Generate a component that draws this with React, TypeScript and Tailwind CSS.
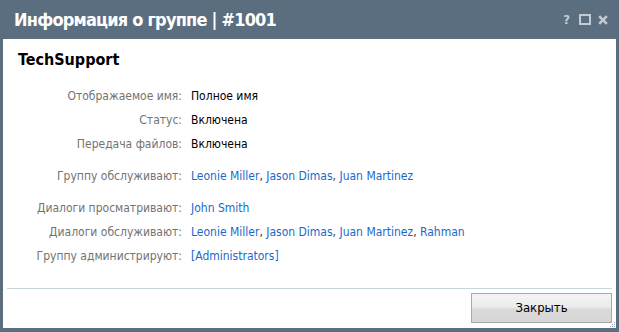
import React from 'react';

const font = { fontFamily: '"DejaVu Sans Condensed", "DejaVu Sans", Tahoma, sans-serif' };

type Row = { label: string; value?: string; links?: string[]; mt?: boolean };

const rows: Row[] = [
  { label: 'Отображаемое имя:', value: 'Полное имя' },
  { label: 'Статус:', value: 'Включена' },
  { label: 'Передача файлов:', value: 'Включена' },
  { label: 'Группу обслуживают:', links: ['Leonie Miller', 'Jason Dimas', 'Juan Martinez'], mt: true },
  { label: 'Диалоги просматривают:', links: ['John Smith'], mt: true },
  { label: 'Диалоги обслуживают:', links: ['Leonie Miller', 'Jason Dimas', 'Juan Martinez', 'Rahman'] },
  { label: 'Группу администрируют:', links: ['[Administrators]'] },
];

const App: React.FC = () => {
  return (
    <div className="w-[619px] h-[332px] bg-[#5b6e80] flex flex-col px-[3px] pb-[4px]" style={font}>
      {/* title bar */}
      <div className="h-[39px] flex items-center justify-between pl-[11px] pr-[8px]">
        <span className="text-white font-bold text-[18px] tracking-[-0.8px]">Информация о группе | #1001</span>
        <div className="flex items-center text-[#c3cbd3]">
          <span className="text-[13px] leading-none font-bold">?</span>
          <span className="ml-[9px] w-[12px] h-[11px] border-2 border-[#c3cbd3]"></span>
          <svg className="ml-[7px]" width="10" height="10" viewBox="0 0 10 10">
            <path d="M1.2 1.2 L8.8 8.8 M8.8 1.2 L1.2 8.8" stroke="#c3cbd3" strokeWidth="2.6" />
          </svg>
        </div>
      </div>

      {/* body */}
      <div className="relative flex-1 bg-white flex flex-col">
        <div className="px-[15px] pt-[11px] flex-1">
          <h1 className="text-[16px] font-bold text-black leading-[20px]">TechSupport</h1>
          <div className="mt-[14px] flex flex-col text-[12px]">
            {rows.map((r, i) => (
              <div key={i} className={`flex h-[24px] items-center ${r.mt ? 'mt-[8px]' : ''}`}>
                <span className="w-[164px] text-right text-[#737373] shrink-0">{r.label}</span>
                <span className="ml-[9px]">
                  {r.value && <span className="text-black">{r.value}</span>}
                  {r.links &&
                    r.links.map((l, j) => (
                      <span key={j}>
                        <span className="text-[#1b6ac9]">{l}</span>
                        {j < r.links!.length - 1 && <span className="text-[#333]">, </span>}
                      </span>
                    ))}
                </span>
              </div>
            ))}
          </div>
        </div>

        <div className="mx-[4px] border-t border-[#c5d6dd]"></div>
        <div className="flex justify-end pt-[4px] pb-[5px] pr-[4px]">
          <button
            className="w-[141px] h-[30px] border border-[#a8a8a8] text-[13px] text-black bg-[linear-gradient(to_bottom,#f4f4f4_0%,#ececec_45%,#dadada_55%,#d6d6d6_100%)]"
            style={font}
          >
            Закрыть
          </button>
        </div>

        {/* resize grip */}
        <svg className="absolute right-0 bottom-0" width="6" height="6" viewBox="0 0 6 6">
          <rect x="4" y="0" width="1" height="1" fill="#9aa4ad" />
          <rect x="2" y="2" width="1" height="1" fill="#9aa4ad" />
          <rect x="4" y="2" width="1" height="1" fill="#9aa4ad" />
          <rect x="0" y="4" width="1" height="1" fill="#9aa4ad" />
          <rect x="2" y="4" width="1" height="1" fill="#9aa4ad" />
          <rect x="4" y="4" width="1" height="1" fill="#9aa4ad" />
        </svg>
      </div>
    </div>
  );
};

export default App;
